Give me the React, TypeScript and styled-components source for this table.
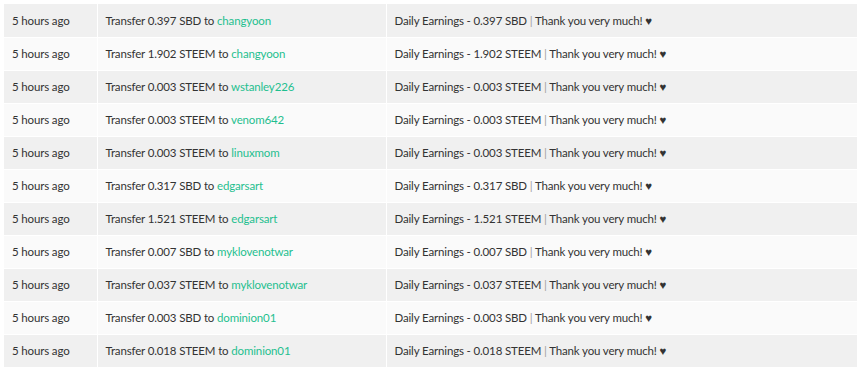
import styled, { createGlobalStyle } from 'styled-components';

const GlobalStyle = createGlobalStyle`
  html, body { margin: 0; padding: 0; background: #ffffff; overflow: hidden; }
  body { padding: 4px 0 0 4px; }
`;

const Table = styled.table`
  width: 856px;
  border-collapse: collapse;
  table-layout: fixed;
  font-family: Lato, 'Liberation Sans', sans-serif;
  font-size: 11.5px;
  letter-spacing: -0.15px;
  color: #333333;
`;

const Row = styled.tr<{ $odd: boolean }>`
  height: 33px;
  background: ${(p) => (p.$odd ? '#f0f0f0' : '#fafafa')};
`;

const Col = styled.col<{ $w?: number }>`
  width: ${(p) => (p.$w ? `${p.$w}px` : 'auto')};
`;

const Cell = styled.td`
  padding: 0 8px;
  border-right: 1px solid #ffffff;
  border-bottom: 1px solid #ffffff;
  white-space: nowrap;
  overflow: hidden;
  vertical-align: middle;
`;

const Account = styled.span`
  color: #1fbf8f;
`;

const Pipe = styled.span`
  color: #a0a0a0;
`;

type Tx = { amount: string; to: string };

const TXS: Tx[] = [
  { amount: '0.397 SBD', to: 'changyoon' },
  { amount: '1.902 STEEM', to: 'changyoon' },
  { amount: '0.003 STEEM', to: 'wstanley226' },
  { amount: '0.003 STEEM', to: 'venom642' },
  { amount: '0.003 STEEM', to: 'linuxmom' },
  { amount: '0.317 SBD', to: 'edgarsart' },
  { amount: '1.521 STEEM', to: 'edgarsart' },
  { amount: '0.007 SBD', to: 'myklovenotwar' },
  { amount: '0.037 STEEM', to: 'myklovenotwar' },
  { amount: '0.003 SBD', to: 'dominion01' },
  { amount: '0.018 STEEM', to: 'dominion01' },
];

export default function App() {
  return (
    <>
      <GlobalStyle />
      <Table>
        <colgroup>
          <Col $w={93} />
          <Col $w={289} />
          <Col />
        </colgroup>
        <tbody>
          {TXS.map((t, i) => (
            <Row key={i} $odd={i % 2 === 0}>
              <Cell>5 hours ago</Cell>
              <Cell>
                Transfer {t.amount} to <Account>{t.to}</Account>
              </Cell>
              <Cell>
                Daily Earnings - {t.amount} <Pipe>|</Pipe> Thank you very much! ♥
              </Cell>
            </Row>
          ))}
        </tbody>
      </Table>
    </>
  );
}
